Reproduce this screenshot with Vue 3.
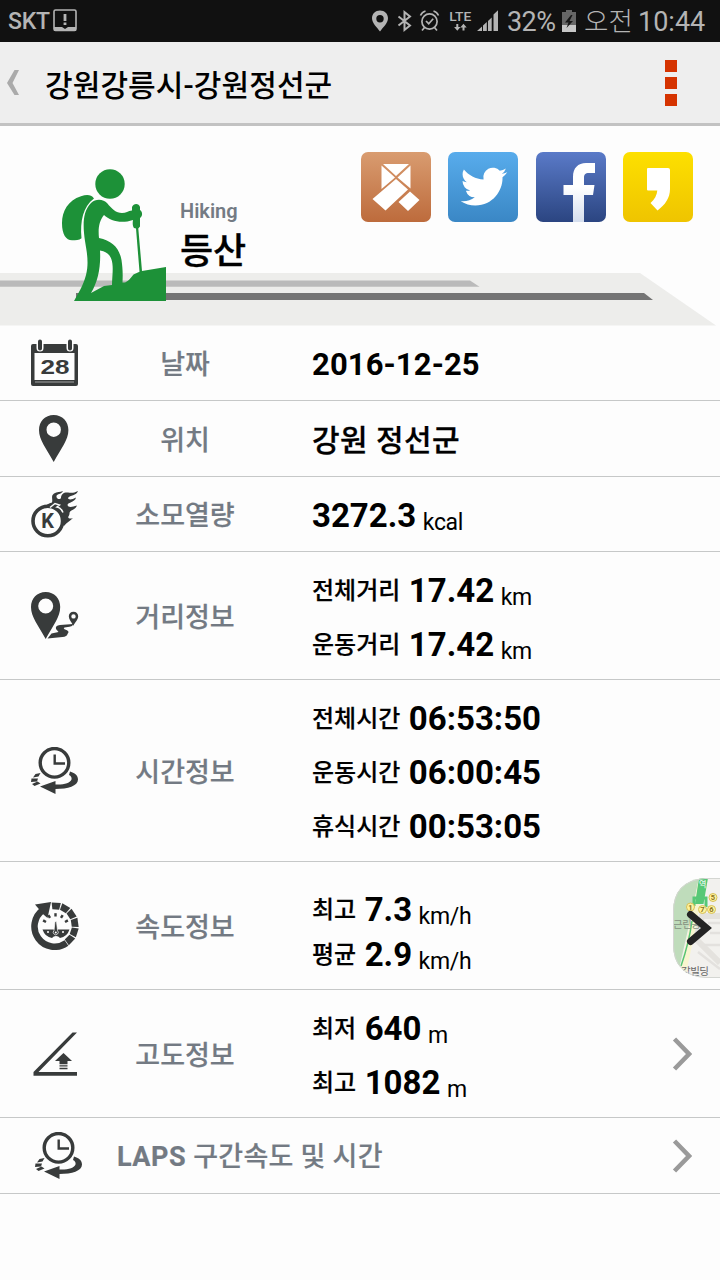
<script setup>
const rows = [
  { icon: 'date', label: '날짜', h: 75, lines: [{ v: '2016-12-25', cls: 'date' }] },
  { icon: 'place', label: '위치', h: 76, lines: [{ v: '강원 정선군', cls: 'place' }] },
  { icon: 'burn', label: '소모열량', h: 75, lines: [{ v: '3272.3', u: 'kcal' }] },
  { icon: 'route', label: '거리정보', h: 128, lines: [{ k: '전체거리', v: '17.42', u: 'km' }, { k: '운동거리', v: '17.42', u: 'km' }] },
  { icon: 'clock', label: '시간정보', h: 182, lines: [{ k: '전체시간', v: '06:53:50', cls: 'time' }, { k: '운동시간', v: '06:00:45', cls: 'time' }, { k: '휴식시간', v: '00:53:05', cls: 'time' }] },
  { icon: 'speed', label: '속도정보', h: 128, tight: true, map: true, lines: [{ k: '최고', v: '7.3', u: 'km/h' }, { k: '평균', v: '2.9', u: 'km/h' }] },
  { icon: 'slope', label: '고도정보', h: 128, arrow: true, lines: [{ k: '최저', v: '640', u: 'm' }, { k: '최고', v: '1082', u: 'm' }] },
  { icon: 'clock', prefix: 'LAPS', label: '구간속도 및 시간', h: 76, arrow: true, laps: true, lines: [] },
]
const segments = [-86, -60, -34, -8, 18, 44]
const dots = [-150, -120, -90, -60, -30]
const stops = [[18.5, 29, 1], [30.5, 31.5, 7], [39.5, 31.5, 6], [41, 19.5, 5]]
</script>

<template>
  <div class="screen">
    <div class="status">
      <span class="carrier">SKT</span>
      <svg class="notice" width="24" height="23" viewBox="0 0 24 23">
        <rect x="1" y="1" width="22" height="20.500" rx="1.500" fill="none" stroke="#b4b4b4" stroke-width="1.600" />
        <path d="M1 18h8l3 2 3-2h8v4H1z" fill="#b4b4b4" />
        <path d="M10.600 5h2.800v7h-2.800zM10.600 13.500h2.800v2.500h-2.800z" fill="#b4b4b4" />
      </svg>
      <svg class="tray" width="150" height="42" viewBox="370 0 150 42" fill="#b4b4b4">
        <path fill-rule="evenodd" d="M380 10.500c-4.600 0-8 3.400-8 7.700 0 5 5 9 8 13.300 3-4.300 8-8.300 8-13.300 0-4.300-3.400-7.700-8-7.700zm0 4.600a3.700 3.700 0 1 1 0 7.400 3.700 3.700 0 0 1 0-7.400z" />
        <path d="M398.500 16.500l11.500 9-5.500 4.500V12l5.500 4.500-11.500 9" fill="none" stroke="#b4b4b4" stroke-width="2" />
        <g fill="none" stroke="#b4b4b4" stroke-width="1.700">
          <circle cx="429.500" cy="21.500" r="7.600" />
          <path d="M420.500 15.500q1.500-3.500 5-4.500M433.500 11q3.500 1 5 4.500M424.500 27.500l-2.500 3M434.500 27.500l2.500 3M426 21l2.700 2.700 4.500-5" />
        </g>
        <text x="449.300" y="20.800" class="lte" textLength="22" lengthAdjust="spacingAndGlyphs">LTE</text>
        <path d="M456.300 24h2v3h2.200l-3.200 3.700-3.200-3.700h2.200zM462.500 30.500h2v-3h2.200l-3.200-3.700-3.200 3.700h2.200z" />
        <path d="M477 31l5-4.600V31zM483 25.500l3.800-3.500V31H483zM488 21l3.700-3.500V31H488zM493.500 14.500l4.500-4.300V31h-4.500z" />
      </svg>
      <span class="pct">32%</span>
      <svg class="battery" width="14" height="22" viewBox="0 0 14 22">
        <path d="M4 0h6v2h4v20H0V2h4z" fill="#666" />
        <path d="M0 15h14v7H0z" fill="#c6c6c6" />
        <path d="M9 5L3 12.500h3.500L4.500 18l6.500-7H7.500L10.500 5z" fill="#171717" />
      </svg>
      <span class="ampm">오전</span>
      <span class="clocktext">10:44</span>
    </div>

    <div class="header">
      <svg class="back" width="13" height="26" viewBox="0 0 13 26"><path d="M7.500 0H12L5.500 13 12 25H7.500L0 13z" fill="#aaa" /></svg>
      <span class="title">강원강릉시-강원정선군</span>
      <div class="more"><i></i><i></i><i></i></div>
    </div>

    <div class="hero">
      <svg class="ribbon" width="720" height="53" viewBox="0 0 720 53">
        <path d="M0 0h640l76 52.500H0z" fill="#ededeb" />
        <path d="M0 7.500h470l9.500 6.200H0z" fill="#bababa" />
        <path d="M76 20h568l9 7H76z" fill="#747474" />
      </svg>
      <svg class="hiker" width="108" height="134" viewBox="60 168 108 134" fill="#1d9138">
        <circle cx="110" cy="184" r="14.700" />
        <path d="M94 198.500c-3-4-7-4-13-2.300-13 4-19 15-19 27 0 11 4 17 10 17 4 0 7 0 9.500-2-1.500-17 1.500-31.500 12.500-39.700z" />
        <path d="M91 203c5-5 13-3.500 16 0 5 6 9 10 15 10 4 0 6-2 10-2.500V207c1.500-4 7-4 8 0v3c3 2 2.500 6.500 0 8v8.500l-1.700 2 3.700 42.500 24-4V301H74c4-7 9-15 12-26 3-12 1-22-1-34-2-14-3-29 6-38zm13 12c-5 6-6 14-5 23 13 3 20 9 22.500 22 1 7 1.500 13 1 22.500 3.500.5 6-1.500 11-8l6-2.800-3.500-43.200-2-.5c-1.500-2-1.500-5-1-8-12 4-22.500 1-29-5zM100 250.500c1 16-2 31-9 42.500l13-7 8-1c0-8 2-19-.7-26-2-5-5-7.500-11.300-8.500z" fill-rule="evenodd" />
      </svg>
      <div class="names"><span class="en">Hiking</span><span class="ko">등산</span></div>
      <div class="shares">
        <svg width="70" height="70" viewBox="0 0 70 70">
          <defs><linearGradient id="gb" x2="0" y2="1"><stop stop-color="#d99c70" /><stop offset="1" stop-color="#bd6b3c" /></linearGradient></defs>
          <rect width="70" height="70" rx="7" fill="url(#gb)" />
          <path d="M22 12h26L35 24zM20.500 13.500L34 25.500 20.500 37zM49.500 13.500V36.500L36.500 25.500zM35 27l12 10.500-22.500 21L11.500 47zM49 39.500l9.500 8.500-11.500 11-9.500-9z" fill="#fff" />
        </svg>
        <svg width="70" height="70" viewBox="0 0 70 70">
          <defs><linearGradient id="gt" x2="0" y2="1"><stop stop-color="#58acec" /><stop offset="1" stop-color="#3a87c5" /></linearGradient></defs>
          <rect width="70" height="70" rx="7" fill="url(#gt)" />
          <path transform="translate(12.700 11.300) scale(1.940)" fill="#fff" d="M23.953 4.570a10 10 0 01-2.825.775 4.958 4.958 0 002.163-2.723c-.951.555-2.005.959-3.127 1.184a4.920 4.920 0 00-8.384 4.482C7.690 8.095 4.067 6.130 1.640 3.162a4.822 4.822 0 00-.666 2.475c0 1.710.870 3.213 2.188 4.096a4.904 4.904 0 01-2.228-.616v.060a4.923 4.923 0 003.946 4.827 4.996 4.996 0 01-2.212.085 4.936 4.936 0 004.604 3.417 9.867 9.867 0 01-6.102 2.105c-.390 0-.779-.023-1.170-.067a13.995 13.995 0 007.557 2.209c9.053 0 13.998-7.496 13.998-13.985 0-.210 0-.420-.015-.630A9.935 9.935 0 0024 4.590z" />
        </svg>
        <svg width="70" height="70" viewBox="0 0 70 70">
          <defs><linearGradient id="gf" x2="0" y2="1"><stop stop-color="#5a7ac8" /><stop offset="1" stop-color="#2b4581" /></linearGradient><linearGradient id="gw" x2="0" y2="1"><stop offset=".4" stop-color="#fff" /><stop offset="1" stop-color="#d5deee" /></linearGradient></defs>
          <rect width="70" height="70" rx="7" fill="url(#gf)" />
          <path d="M37 70V43H27.500V33H37v-8c0-9 5-14 13-14h9v10h-6c-4 0-5 1.500-5 5v7h10.500l-1.500 10h-9v27z" fill="url(#gw)" />
        </svg>
        <svg width="70" height="70" viewBox="0 0 70 70">
          <defs><linearGradient id="gy" x2="0" y2="1"><stop stop-color="#fde000" /><stop offset="1" stop-color="#efc400" /></linearGradient></defs>
          <rect width="70" height="70" rx="7" fill="url(#gy)" />
          <path d="M25 16h20q2 0 2 2v19c0 9-5 16-12.500 21.500L27.500 51c4-3.500 6.500-8 6.800-12.500H25q-1 0-1-1V17q0-1 1-1z" fill="#fff" />
        </svg>
      </div>
    </div>

    <div v-for="r in rows" :key="r.label" class="row" :class="{ laps: r.laps }" :style="{ height: r.h + 'px' }">
      <div class="icon">
        <svg v-if="r.icon === 'date'" width="48" height="48" viewBox="0 0 48 48" fill="#383b3b">
          <path fill-rule="evenodd" d="M2 5h43q2 0 2 2v38q0 2-2 2H2q-2 0-2-2V7q0-2 2-2zm1.500 9v27h40V14z" />
          <path d="M4 43h39" stroke="#808383" stroke-width="1.500" />
          <path d="M9 3v6M39 3v6" stroke="#fff" stroke-width="7" stroke-linecap="round" />
          <path d="M9 2.500v7M39 2.500v7" stroke="#383b3b" stroke-width="4" stroke-linecap="round" />
          <text x="24" y="34.500" text-anchor="middle" class="cal" textLength="29" lengthAdjust="spacingAndGlyphs">28</text>
        </svg>
        <svg v-else-if="r.icon === 'place'" width="48" height="48" viewBox="0 0 48 48" fill="#383b3b">
          <path fill-rule="evenodd" d="M22.700 0C14 0 8 6.500 8 15c0 10 7 18 14.700 32 7.700-14 14.700-22 14.700-32C37.400 6.500 31.400 0 22.700 0zm0 7.500a7.200 7.200 0 1 1 0 14.400 7.200 7.200 0 0 1 0-14.400z" />
        </svg>
        <svg v-else-if="r.icon === 'burn'" width="48" height="48" viewBox="0 0 48 48" fill="#383b3b">
          <path d="M14 17Q16 13.500 21 12.500C22 9 19.500 6 23 3.500 26 1.500 29 2.500 32 1c-2 4-7 2.500-6.500 6 .3 2 3.500 3 4.500 1 0-4 3-6 7-5.500 3.500.5 6 .5 10-1.500-1.500 5-8 4-10 7 0 2 4 2 8-.5-1 5-8 4.500-8.500 7.500.5 2.500 4 2.500 9.500.5-2 5-7.500 4-7.500 8 0 2-2 3.500-1 4.500 1.500 1 3 .5 4.500 0-3 3-6 4-9 8L24 27z" />
          <circle cx="16.800" cy="31" r="14.800" fill="#fdfdfd" stroke="#383b3b" stroke-width="3.600" />
          <path d="M19 17.500l5-4 4.500 1.500-2.500 2q4 .5 6 5.500" fill="none" stroke="#fdfdfd" stroke-width="1.500" />
          <text x="16.700" y="37.500" text-anchor="middle" class="kk">K</text>
        </svg>
        <svg v-else-if="r.icon === 'route'" width="48" height="48" viewBox="0 0 48 48" fill="#383b3b">
          <path fill-rule="evenodd" d="M14.700 0C6 0 0 6.500 0 15c0 10 7 18 14.700 32C22.400 33 29.200 25 29.200 15 29.200 6.500 23.400 0 14.700 0zm0 6.500a7.500 7.500 0 1 1 0 15 7.500 7.500 0 0 1 0-15z" />
          <path fill-rule="evenodd" d="M42.500 19.700c-2.700 0-4.700 2-4.700 4.600 0 3 2.500 5.500 4.500 9.500 2.300-4 4.900-6.500 4.900-9.500 0-2.600-2-4.600-4.700-4.600zm0 2.500a2.200 2.200 0 1 1 0 4.400 2.200 2.200 0 0 1 0-4.400z" />
          <path d="M42.500 32q-1 2.500-4 2.800l-5 .7q-1.500.5 0 1.800 6 1.700 3 4.700-.5 2.700-5 3L16.500 46.500 20.500 41.500l7-1.500-2.500-3q-1-3.500 4-4z" />
        </svg>
        <svg v-else-if="r.icon === 'clock'" width="48" height="48" viewBox="0 0 48 48" fill="#383b3b">
          <circle cx="23.500" cy="15.800" r="14.300" fill="none" stroke="#383b3b" stroke-width="3.400" />
          <path d="M23.700 7.500v9H34" fill="none" stroke="#383b3b" stroke-width="2.400" />
          <path d="M39 24.500c5.500 1.500 8 4.500 8 8 0 6.500-10 9.500-22.500 9.500V47L9 39.500 24.500 34v3.500c8 .5 15-1.500 16-5 .5-2-.5-3.500-2.500-4.500z" />
          <path d="M4.500 27l5-1-2 3.500-5.500 1zM.5 31.500H7l-1 3-6 .5zM1 37l5.500-2.500 3 2L3.500 39z" />
        </svg>
        <svg v-else-if="r.icon === 'speed'" width="48" height="48" viewBox="0 0 48 48" fill="#383b3b">
          <path d="M35.500 41A20.200 20.200 0 1 1 12 8" fill="none" stroke="#383b3b" stroke-width="6.500" />
          <path d="M4 2.500L20 0 16.500 16l-4-3.500z" />
          <g v-for="a in segments" :key="a" :transform="`translate(24 24) rotate(${a})`"><path d="M16.500 -3.800L23.300 -5V4.200L16.500 3z" /></g>
          <g v-for="a in dots" :key="a" :transform="`translate(24.500 25.500) rotate(${a})`"><path d="M11 -1.200h3.300v2.400H11z" /></g>
          <path d="M11.500 27.500h27q-2.500 7.500-9.500 8.500-1.500-2-4-2t-4 2q-7-1-9.500-8.500z" />
          <path d="M24 19.500h1.500l1 9a2.500 2.500 0 1 1-3.500 0z" stroke="#fff" stroke-width=".7" />
          <circle cx="24.800" cy="30.500" r="1" fill="#fff" />
          <path d="M16 30h2M31 30h2" stroke="#fff" stroke-width="1.500" />
        </svg>
        <svg v-else width="48" height="48" viewBox="0 0 48 48" fill="#383b3b">
          <path d="M41.500 2.500H46L7.500 42H46v3.700H2.500v-3.700z" />
          <path d="M32.500 23l8.500 8h-4.500v3.200h-8V31H24zM28.500 35.200h8v1.200h-8zM28.500 37.700h8v1.500h-8z" />
        </svg>
      </div>
      <div class="label"><b v-if="r.prefix">{{ r.prefix }}&nbsp;</b><span>{{ r.label }}</span></div>
      <div v-if="!r.laps" class="values" :class="{ tight: r.tight }">
        <div v-for="(l, i) in r.lines" :key="i" class="line">
          <span v-if="l.k" class="key">{{ l.k }}</span>
          <span class="num" :class="l.cls">{{ l.v }}</span>
          <span v-if="l.u" class="unit">{{ l.u }}</span>
        </div>
      </div>
      <svg v-if="r.arrow" class="chev" width="20" height="34" viewBox="0 0 20 34"><path d="M2.500 2L17 17 2.500 32" fill="none" stroke="#9a9a9a" stroke-width="4.500" /></svg>
      <svg v-if="r.map" class="map" width="48" height="100" viewBox="0 0 48 100">
        <defs><clipPath id="mc"><path d="M48 0H32Q1 3 1 34V66Q1 97 32 100H48z" /></clipPath></defs>
        <g clip-path="url(#mc)">
          <rect width="48" height="100" fill="#f2f1ee" />
          <path d="M0 0h27L17 47 5 100H0z" fill="#bfdcbb" />
          <path d="M27 0h6L22 58 13 100H7L17 50z" fill="#f8f5cf" />
          <path d="M20 43Q17 65 9 88" fill="none" stroke="#58c474" stroke-width="1.500" />
          <path d="M48 38H30L24 61l24 24" fill="none" stroke="#e4e2de" stroke-width="6" />
          <path d="M26 74l22 17M36 45h12M38 55h10M32 67h16" stroke="#e3e1de" stroke-width="2.500" />
          <path d="M22 28v-8h12v9" fill="none" stroke="#57c877" stroke-width="3" />
          <path d="M27 0h9l-4.500 26H23z" fill="#57c877" />
          <text x="27" y="9" class="mt tiny">역</text>
          <text x="1" y="50" class="mt">근린공</text>
          <text x="9" y="97" class="mt dark">각빌딩</text>
          <g v-for="b in stops" :key="b[2]">
            <circle :cx="b[0]" :cy="b[1]" r="4" fill="#fff3a0" stroke="#d6c058" />
            <text :x="b[0]" :y="b[1] + 2.800" text-anchor="middle" class="bn">{{ b[2] }}</text>
          </g>
        </g>
        <path d="M48 .5H33Q1.500 3 1.500 34V66Q1.500 97 33 99.500H48" fill="none" stroke="#d4d6d2" />
        <path d="M18.500 36.500l16 13.500-16 13.500" fill="none" stroke="#242424" stroke-width="7" stroke-linecap="round" />
      </svg>
    </div>
  </div>
</template>

<style>
html, body { background: #fdfdfd; }
</style>
<style scoped>
.screen { width: 720px; height: 1280px; overflow: hidden; background: #fdfdfd; color: #000; font-family: Roboto, "Noto Sans CJK KR", sans-serif; }
.status { height: 42px; background: #111; color: #b4b4b4; display: flex; align-items: center; white-space: nowrap; }
.carrier { font-size: 23px; margin-left: 8px; width: 45px; letter-spacing: -.2px; font-weight: 500; }
.notice { margin-top: -1px; }
.tray { margin-left: 293px; }
.lte { font-size: 13.500px; font-weight: 500; font-family: Roboto, sans-serif; }
.pct { font-size: 27px; margin-left: -13px; width: 55px; letter-spacing: -.6px; padding-top: 1px; }
.battery { margin-top: -1px; }
.ampm { font-size: 26.500px; margin-left: 8px; width: 54px; font-weight: 300; line-height: 42px; padding-top: 2px; }
.clocktext { font-size: 27px; padding-top: 1px; }
.header { height: 81px; background: #eee; border-bottom: 3px solid #c2c2c2; display: flex; align-items: center; }
.back { margin: 1px 0 0 7px; }
.title { font-size: 30px; line-height: 40px; margin: 7px 0 0 25px; flex: 1; font-weight: 500; white-space: nowrap; letter-spacing: .1px; }
.more { display: flex; flex-direction: column; gap: 5px; margin: 1px 43px 0 0; }
.more i { width: 12px; height: 12px; background: #d53300; }
.hero { height: 200px; position: relative; display: flex; }
.ribbon { position: absolute; left: 0; top: 147px; }
.hiker { position: relative; margin: 42px 0 0 60px; }
.names { position: relative; display: flex; flex-direction: column; margin: 72px 0 0 12px; width: 181px; }
.en { font-size: 20px; line-height: 26px; color: #747b84; font-weight: 600; }
.ko { font-size: 36px; line-height: 46px; font-weight: 500; margin-top: 5px; letter-spacing: -.2px; -webkit-text-stroke: .4px #000; }
.shares { display: flex; gap: 17.400px; padding-top: 26px; }
.row { box-sizing: border-box; border-bottom: 1px solid #c6c8c8; display: flex; align-items: center; position: relative; }
.icon { width: 48px; height: 48px; margin-left: 31px; }
.icon svg { display: block; }
.label { width: 212px; text-align: center; font-size: 27px; line-height: 40px; font-weight: 500; color: #737a83; white-space: nowrap; padding-top: 4px; -webkit-text-stroke: .2px #737a83; }
.label b { font-weight: 700; letter-spacing: .5px; }
.laps .icon { margin-left: 35px; }
.laps .label { margin-left: 34px; width: auto; padding-top: 3px; letter-spacing: .25px; }
.values { margin-left: 21px; padding-top: 4px; }
.line { height: 54px; line-height: 54px; display: flex; align-items: baseline; white-space: nowrap; }
.tight { padding-top: 13px; }
.tight .line { height: 45.500px; line-height: 45.500px; }
.key { font-size: 24px; font-weight: 500; margin-right: 8.500px; position: relative; top: -3px; -webkit-text-stroke: .2px #000; }
.num { font-size: 33px; font-weight: 700; }
.num.date { font-size: 31px; letter-spacing: .1px; }
.num.place { font-size: 30px; font-weight: 500; letter-spacing: .45px; -webkit-text-stroke: .3px #000; }
.unit { font-size: 23px; margin-left: 6.500px; position: relative; top: 3px; letter-spacing: -.3px; }
.chev { margin-left: auto; margin-right: 28px; }
.map { position: absolute; right: 0; top: 16px; }
.cal { font: 700 21px "Liberation Sans", sans-serif; }
.kk { font: 700 20px Roboto, sans-serif; }
.mt { font: 10.500px "Noto Sans CJK KR", sans-serif; fill: #85917f; letter-spacing: -.5px; }
.mt.dark { fill: #666; }
.mt.tiny { font-size: 8px; fill: #fff; }
.bn { font: 700 7.500px Roboto, sans-serif; fill: #8a7420; }
</style>
